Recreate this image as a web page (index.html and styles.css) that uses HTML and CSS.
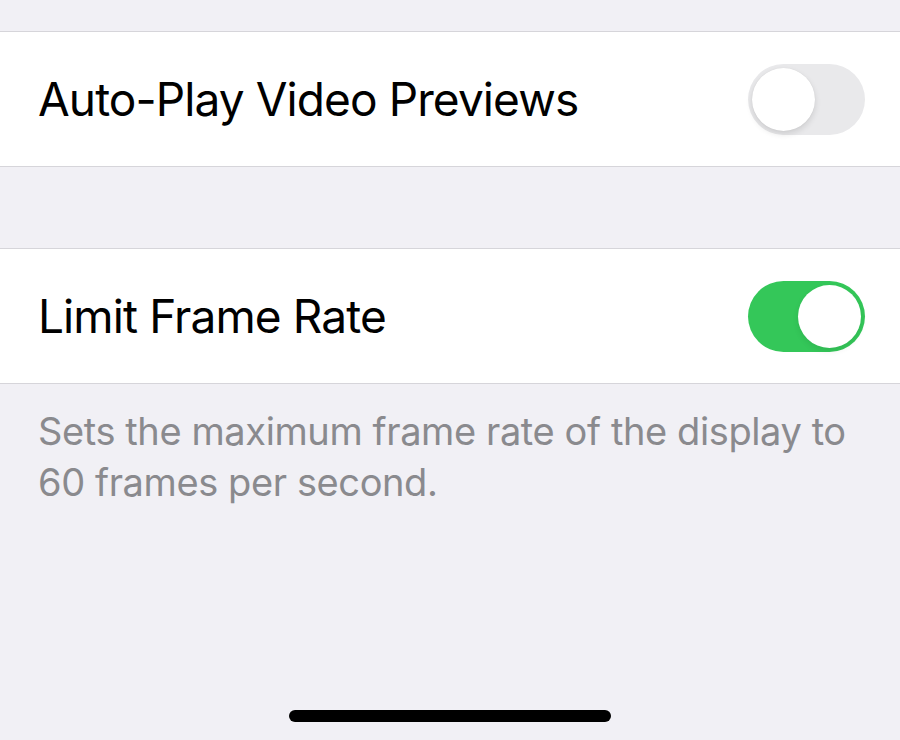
FILE: index.html
```html
<!DOCTYPE html>
<html>
<head>
<meta charset="utf-8">
<link rel="stylesheet" href="styles.css">
</head>
<body>
<div class="screen">
  <div class="top-gap"></div>
  <div class="group">
    <div class="row">
      <span class="label">Auto-Play Video Previews</span>
      <span class="switch"><span class="knob"></span></span>
    </div>
  </div>
  <div class="section-gap"></div>
  <div class="group">
    <div class="row">
      <span class="label">Limit Frame Rate</span>
      <span class="switch on"><span class="knob"></span></span>
    </div>
  </div>
  <p class="footer">Sets the maximum frame rate of the display to 60 frames per second.</p>
  <div class="spacer"></div>
  <div class="home-bar"></div>
</div>
</body>
</html>
```
FILE: styles.css
```css
html, body {
  margin: 0;
  padding: 0;
  background: #f1f0f5;
}
.screen {
  width: 900px;
  height: 740px;
  display: flex;
  flex-direction: column;
  background: #f1f0f5;
  font-family: Inter, "Liberation Sans", sans-serif;
  overflow: hidden;
}
.top-gap {
  height: 31px;
  flex: none;
}
.section-gap {
  height: 81px;
  flex: none;
}
.group {
  background: #fff;
  border-top: 1.5px solid #d6d5da;
  border-bottom: 1.5px solid #d6d5da;
  flex: none;
}
.row {
  height: 134px;
  display: flex;
  align-items: center;
  justify-content: space-between;
  padding: 0 35px 0 38px;
}
.label {
  font-size: 46px;
  color: #000;
  letter-spacing: -0.9px;
}
.switch {
  width: 117px;
  height: 71px;
  border-radius: 36px;
  background: #e9e9eb;
  display: flex;
  align-items: center;
  padding: 0 4px;
  box-sizing: border-box;
  flex: none;
}
.switch .knob {
  width: 63px;
  height: 63px;
  border-radius: 50%;
  background: #fff;
  box-shadow: 0 3px 6px rgba(0,0,0,0.12), 0 0 1px rgba(0,0,0,0.1);
}
.switch.on {
  background: #34c759;
  justify-content: flex-end;
}
.switch.on .knob {
  box-shadow: 0 3px 6px rgba(0,0,0,0.08);
}
.footer {
  margin: 0;
  padding: 22px 12px 0 38px;
  font-size: 38px;
  line-height: 51px;
  color: #8a8a8e;
  letter-spacing: -0.4px;
}
.spacer {
  flex: 1;
}
.home-bar {
  width: 322px;
  height: 12px;
  border-radius: 6px;
  background: #000;
  align-self: center;
  margin-bottom: 18px;
  flex: none;
}
```
